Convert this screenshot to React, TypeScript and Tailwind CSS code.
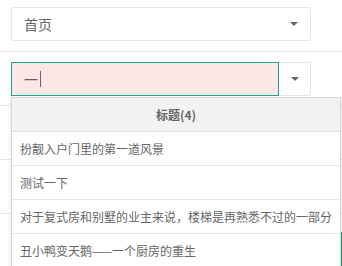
import React from 'react';

const items = [
  '扮靓入户门里的第一道风景',
  '测试一下',
  '对于复式房和别墅的业主来说，楼梯是再熟悉不过的一部分',
  '丑小鸭变天鹅——一个厨房的重生',
];

const Caret = () => (
  <span className="w-0 h-0 border-x-4 border-x-transparent border-t-4 border-t-[#666]" />
);

const App: React.FC = () => {
  return (
    <div
      className="relative w-[342px] h-[266px] overflow-hidden bg-white text-[#666]"
      style={{ fontFamily: '"Noto Sans CJK SC", "Liberation Sans", sans-serif' }}
    >
      {/* Row 1 */}
      <div className="h-[52px] border-b border-[#e6e6e6] pt-[7px] pl-[11px]">
        <div className="w-[300px] h-[34px] flex items-center justify-between border border-[#e6e6e6] rounded-[2px] pl-[12px] pr-[12px]">
          <span className="text-[14px] leading-none">首页</span>
          <Caret />
        </div>
      </div>

      {/* Row 2 */}
      <div className="h-[54px] border-b border-[#e6e6e6] pt-[10px] pl-[11px]">
        <div className="relative w-[300px] h-[34px] flex border border-[#e6e6e6] border-l-0 rounded-[2px]">
          <div className="w-[268px] h-[34px] -mt-px flex items-center border border-[#1aa68e] bg-[#fde6e6] pl-[12px]">
            <span className="text-[14px] leading-none">一</span>
            <span className="ml-[2px] w-px h-[16px] bg-[#666]" />
          </div>
          <div className="flex-1 flex items-center justify-end pr-[11px]">
            <Caret />
          </div>

          {/* Dropdown panel */}
          <div className="absolute top-[34px] left-0 w-[330px] bg-white border border-[#d8d8d8] shadow-[0_2px_4px_rgba(0,0,0,0.12)] z-10">
            <div className="h-[34px] flex items-center justify-center bg-[#f2f2f2] border-b border-[#e2e2e2] text-[12px] font-bold text-[#666]">
              标题(4)
            </div>
            {items.map((t, i) => (
              <div
                key={i}
                className="h-[34px] flex items-center pl-[8px] border-b border-[#e6e6e6] text-[12px] whitespace-nowrap"
              >
                {t}
              </div>
            ))}
          </div>
        </div>
      </div>

      {/* Rows behind the panel */}
      <div className="h-[54px] border-b border-[#e6e6e6]" />
      <div className="h-[54px] border-b border-[#e6e6e6]" />
      <div className="h-[54px] flex justify-end pt-[18px]">
        <div className="w-px h-full bg-[#1aa68e]" />
      </div>
    </div>
  );
};

export default App;
